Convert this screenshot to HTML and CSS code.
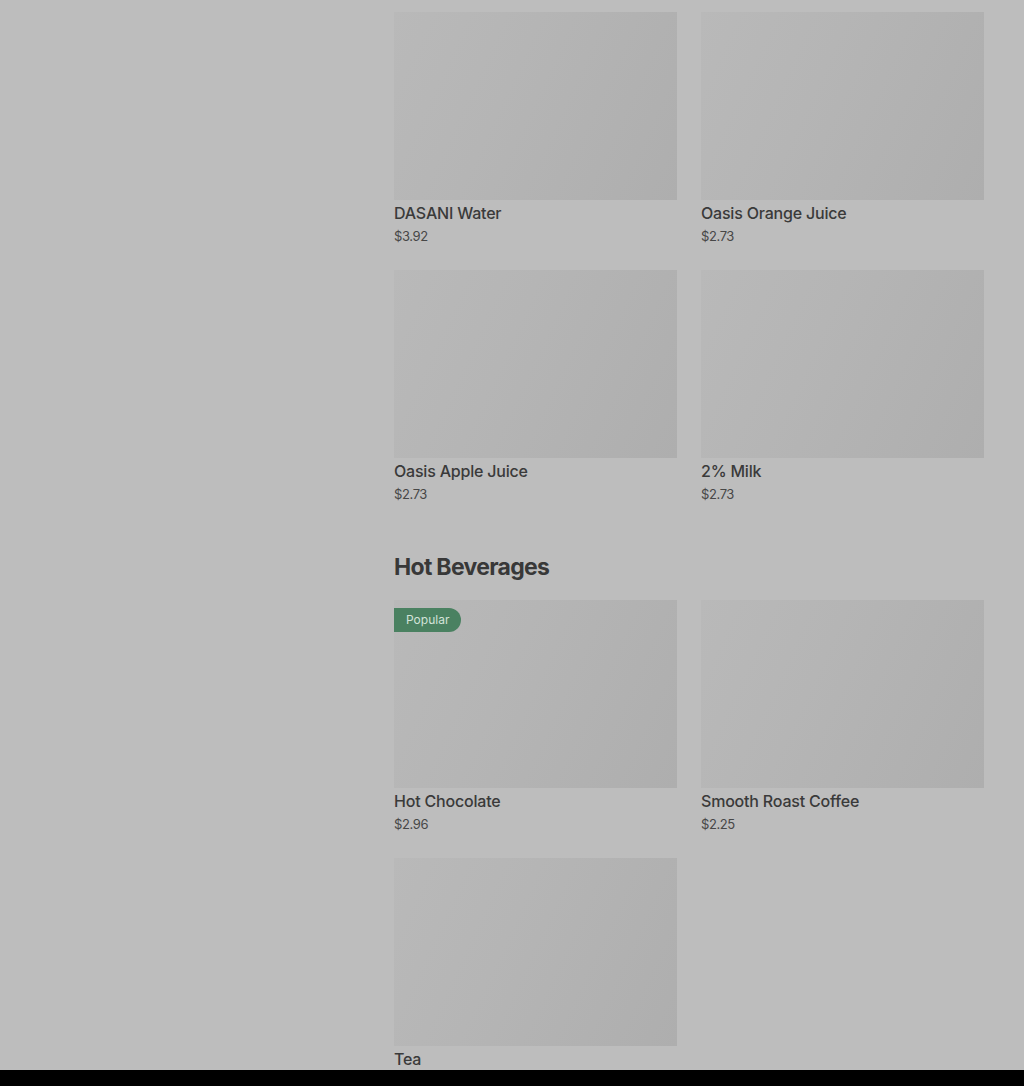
FILE: index.html
```html
<!DOCTYPE html>
<html lang="en">
<head>
    <meta charset="UTF-8">
    <meta name="viewport" content="width=device-width, initial-scale=1.0">
    <title>Menu</title>
    <link rel="stylesheet" href="styles.css">
</head>
<body>
    <div class="page">
        <aside class="side"></aside>

        <main class="menu">
            <section class="category">
                <div class="grid">
                    <div class="item">
                        <div class="thumb"></div>
                        <div class="name">DASANI Water</div>
                        <div class="price">$3.92</div>
                    </div>
                    <div class="item">
                        <div class="thumb"></div>
                        <div class="name">Oasis Orange Juice</div>
                        <div class="price">$2.73</div>
                    </div>
                    <div class="item">
                        <div class="thumb"></div>
                        <div class="name">Oasis Apple Juice</div>
                        <div class="price">$2.73</div>
                    </div>
                    <div class="item">
                        <div class="thumb"></div>
                        <div class="name">2% Milk</div>
                        <div class="price">$2.73</div>
                    </div>
                </div>
            </section>

            <section class="category">
                <h2 class="cat-title">Hot Beverages</h2>
                <div class="grid">
                    <div class="item">
                        <div class="thumb">
                            <span class="badge">Popular</span>
                        </div>
                        <div class="name">Hot Chocolate</div>
                        <div class="price">$2.96</div>
                    </div>
                    <div class="item">
                        <div class="thumb"></div>
                        <div class="name">Smooth Roast Coffee</div>
                        <div class="price">$2.25</div>
                    </div>
                    <div class="item">
                        <div class="thumb"></div>
                        <div class="name">Tea</div>
                        <div class="price">$2.25</div>
                    </div>
                </div>
            </section>
        </main>
    </div>

    <div class="bottom-bar"></div>
</body>
</html>
```

FILE: styles.css
```css
* {
    margin: 0;
    padding: 0;
    box-sizing: border-box;
}

body {
    font-family: Inter, "Noto Sans", sans-serif;
    background: #bdbdbd;
    color: #3a3a3a;
}

.page {
    display: flex;
    padding-top: 12px;
}

.side {
    width: 394px;
    flex-shrink: 0;
}

.menu {
    width: 590px;
}

.cat-title {
    margin: 46px 0 16px;
    font-size: 23px;
    line-height: 34px;
    font-weight: 700;
    letter-spacing: -0.7px;
    color: #383838;
}

.grid {
    display: grid;
    grid-template-columns: 283px 283px;
    column-gap: 24px;
    row-gap: 24px;
}

.thumb {
    position: relative;
    height: 188px;
    background: linear-gradient(115deg, #b9b9b9 0%, #b5b5b5 40%, #aeaeae 100%);
}

.badge {
    position: absolute;
    top: 8px;
    left: 0;
    height: 24px;
    padding: 0 12px;
    line-height: 24px;
    font-size: 12px;
    color: #d3e3d9;
    background: #4a8161;
    border-radius: 0 12px 12px 0;
}

.name {
    font-size: 16px;
    font-weight: 500;
    line-height: 24px;
    margin-top: 1px;
    letter-spacing: -0.2px;
    color: #3a3a3a;
}

.price {
    font-size: 13px;
    line-height: 20px;
    margin-top: 1px;
    letter-spacing: -0.4px;
    color: #474747;
}

.bottom-bar {
    position: fixed;
    left: 0;
    right: 0;
    bottom: 0;
    height: 16px;
    background: #000;
}
```
